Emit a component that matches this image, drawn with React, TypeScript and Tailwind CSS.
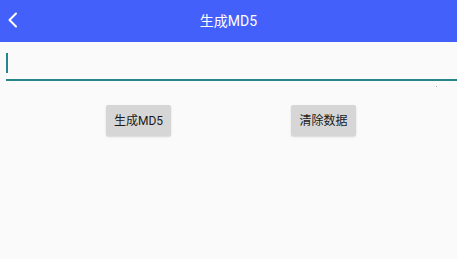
import React from 'react';

const App: React.FC = () => {
  return (
    <div
      className="w-[457px] h-[259px] bg-[#fafafa] overflow-hidden"
      style={{ fontFamily: '"Roboto", "Noto Sans CJK SC", sans-serif' }}
    >
      <div className="h-[42px] bg-[#4460fa] flex items-center relative">
        <svg className="absolute left-[7px] top-[12px]" width="11" height="16" viewBox="0 0 11 16" fill="none">
          <path d="M9 1.5 L2.5 8 L9 14.5" stroke="white" strokeWidth="2" strokeLinecap="round" strokeLinejoin="round" />
        </svg>
        <div className="w-full text-center text-white text-[14px] leading-none">生成MD5</div>
      </div>
      <div className="pl-[6px] pt-[11px]">
        <div className="h-[28px] border-b-2 border-[#25868a] flex items-start">
          <div className="w-[2px] h-[20px] bg-[#25868a]" />
        </div>
        <div className="flex justify-end pr-[20px]">
          <div className="w-[1px] h-[1px] bg-[#9aa] mt-[5px]" />
        </div>
      </div>
      <div className="flex pl-[106px] gap-[120px] mt-[18px]">
        <button className="w-[65px] h-[31px] bg-[#d6d6d6] rounded-[2px] shadow-[0_1px_2px_rgba(0,0,0,0.15)] text-[12px] text-[#1a1a1a]">
          生成MD5
        </button>
        <button className="w-[65px] h-[31px] bg-[#d6d6d6] rounded-[2px] shadow-[0_1px_2px_rgba(0,0,0,0.15)] text-[12px] text-[#1a1a1a]">
          清除数据
        </button>
      </div>
    </div>
  );
};

export default App;
